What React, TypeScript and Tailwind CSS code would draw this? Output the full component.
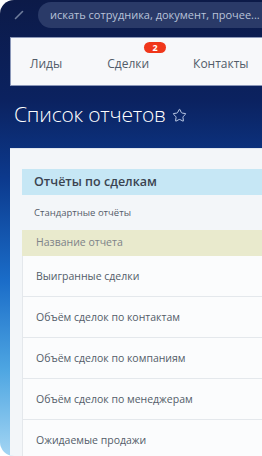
import { Star } from "lucide-react";

const rows = [
  "Выигранные сделки",
  "Объём сделок по контактам",
  "Объём сделок по компаниям",
  "Объём сделок по менеджерам",
  "Ожидаемые продажи",
];

export default function App() {
  return (
    <div className="w-[262px] h-[456px] bg-white">
      <div
        className="w-[262px] h-[456px] overflow-hidden rounded-l-[14px] bg-[linear-gradient(180deg,#0c1a48_0px,#0b2260_100px,#0c3a8e_180px,#1a6cc8_280px,#4ea6e2_370px,#a3d5f3_456px)] flex flex-col"
        style={{ fontFamily: '"Open Sans", "Noto Sans", sans-serif' }}
      >
        {/* Top bar */}
        <div className="h-[37px] shrink-0 flex items-start pt-[2px]">
          <div className="w-[38px] h-[26px] flex items-center justify-center">
            <svg width="10" height="10" viewBox="0 0 10 10">
              <path d="M1.5 8.5 L8.5 1.5" stroke="#6f7d9c" strokeWidth="1.6" strokeLinecap="round" />
            </svg>
          </div>
          <div className="flex-1 h-[26px] rounded-l-full bg-[#2a3a68] flex items-center pl-[12px] whitespace-nowrap overflow-hidden">
            <span className="text-[11px] text-[#b9c3d9]">искать сотрудника, документ, прочее...</span>
          </div>
        </div>

        {/* Tabs */}
        <div className="ml-[10px] h-[49px] shrink-0 bg-[#f7f8fa] border border-[#8b97b8] border-r-0 flex items-center pt-[5px] text-[12px] text-[#525c69] whitespace-nowrap">
          <span className="ml-[19px]">Лиды</span>
          <span className="ml-[45px] relative">
            Сделки
            <span className="absolute -top-[13px] -right-[17px] h-[11px] w-[22px] rounded-full bg-[#f0371b] text-white text-[9px] font-bold leading-[11px] text-center">2</span>
          </span>
          <span className="ml-[44px]">Контакты</span>
        </div>

        {/* Title */}
        <div className="h-[62px] shrink-0 flex items-center pl-[14px] pb-[4px] gap-[6px]">
          <span className="text-[21px] font-light text-white tracking-[-0.2px]">Список отчетов</span>
          <Star size={15} strokeWidth={1.5} className="text-[#c9d6ee] mt-[1px]" />
        </div>

        {/* Panel */}
        <div className="ml-[10px] flex-1 bg-[#f3f6f9] border-t border-[#dfe6ee] pt-[20px] pl-[12px]">
          <div className="h-[26px] bg-[#c6e7f5] flex items-center pl-[12px]">
            <span className="text-[12.5px] font-semibold text-[#3a4350]">Отчёты по сделкам</span>
          </div>
          <div className="h-[35px] flex items-center pl-[12px] pt-[2px]">
            <span className="text-[9.5px] text-[#535c69]">Стандартные отчёты</span>
          </div>
          <div className="h-[26px] bg-[#e9eacd] flex items-center pl-[14px]">
            <span className="text-[10.5px] text-[#7d8288]">Название отчета</span>
          </div>
          {rows.map((r) => (
            <div
              key={r}
              className="h-[41px] bg-[#fbfcfd] border-b border-l border-[#e4e8ec] flex items-center pl-[13px] pt-[2px]"
            >
              <span className="text-[10.5px] text-[#535c69] whitespace-nowrap">{r}</span>
            </div>
          ))}
        </div>
      </div>
    </div>
  );
}
